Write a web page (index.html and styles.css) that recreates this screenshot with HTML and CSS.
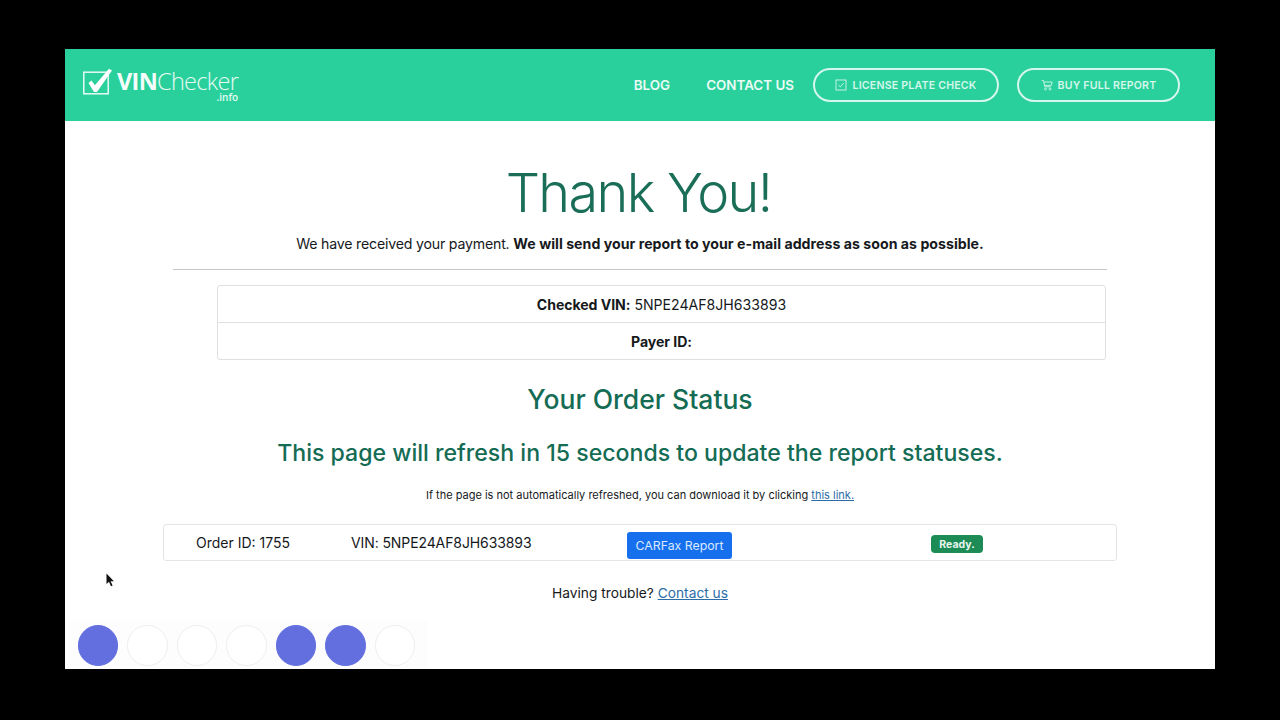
FILE: index.html
```html
<!DOCTYPE html>
<html lang="en">
<head>
<meta charset="utf-8">
<title>Thank You - VINChecker</title>
<link rel="stylesheet" href="styles.css">
</head>
<body>
<div class="window">
  <header class="topbar">
    <a class="logo">
      <svg class="logo-mark" width="30" height="30" viewBox="0 0 30 30" aria-hidden="true">
        <rect x=".8" y="4.2" width="24.4" height="21.6" fill="none" stroke="#e6faf3" stroke-width="1.5"/>
        <path d="M5.5 15l3-2.6 3.4 4.8L26 .8l3 1.8-15 21.4h-3z" fill="#fff"/>
      </svg>
      <span class="logo-text"><span class="logo-name"><b>VIN</b>Checker</span><span class="logo-tld">.info</span></span>
    </a>
    <nav class="nav">
      <a class="nav-link link-blog">BLOG</a>
      <a class="nav-link link-contact">CONTACT US</a>
      <a class="pill pill-plate">
        <svg width="12" height="12" viewBox="0 0 12 12" aria-hidden="true"><rect x="1" y="1" width="10" height="10" fill="none" stroke="#d5f6ea" stroke-width="0.9"/><path d="M3.4 6l1.9 1.9 3.3-3.9" fill="none" stroke="#d5f6ea" stroke-width="0.9"/></svg>
        LICENSE PLATE CHECK
      </a>
      <a class="pill pill-buy">
        <svg width="12" height="12" viewBox="0 0 12 12" aria-hidden="true"><path d="M.6 1.4h1.8l1.4 6.4h6M2.8 3h8.4l-1 3.4H3.5" fill="none" stroke="#d5f6ea" stroke-width="0.9"/><circle cx="4.5" cy="10" r="1" fill="none" stroke="#d5f6ea" stroke-width="0.8"/><circle cx="9" cy="10" r="1" fill="none" stroke="#d5f6ea" stroke-width="0.8"/></svg>
        BUY FULL REPORT
      </a>
    </nav>
  </header>
  <main class="content">
    <h1 class="title">Thank You!</h1>
    <p class="lead">We have received your payment. <strong>We will send your report to your e-mail address as soon as possible.</strong></p>
    <hr class="rule">
    <ul class="facts">
      <li class="fact"><strong>Checked VIN:</strong> 5NPE24AF8JH633893</li>
      <li class="fact"><strong>Payer ID:</strong></li>
    </ul>
    <h2 class="status-title">Your Order Status</h2>
    <h3 class="refresh">This page will refresh in 15 seconds to update the report statuses.</h3>
    <p class="note">If the page is not automatically refreshed, you can download it by clicking <a class="link">this link.</a></p>
    <div class="order">
      <span class="order-id">Order ID: 1755</span>
      <span class="order-vin">VIN: 5NPE24AF8JH633893</span>
      <a class="btn">CARFax Report</a>
      <span class="badge">Ready.</span>
    </div>
    <p class="help">Having trouble? <a class="link">Contact us</a></p>
    <div class="dots">
      <span class="dot on"></span>
      <span class="dot"></span>
      <span class="dot"></span>
      <span class="dot"></span>
      <span class="dot on"></span>
      <span class="dot on"></span>
      <span class="dot"></span>
    </div>
  </main>
  <svg class="cursor" width="9" height="15" viewBox="0 0 9 15" aria-hidden="true"><path d="M.5.5v10.5l2.5-2.2 2 4.4 1.6-.7-2-4.3h3.3z" fill="#111"/></svg>
</div>
</body>
</html>
```

FILE: styles.css
```css
* { box-sizing: border-box; }
html, body { margin: 0; height: 100%; }
body {
  background: #000;
  padding: 49px 65px 51px;
  font-family: Inter, "Liberation Sans", sans-serif;
  color: #16191c;
  overflow: hidden;
}
.window {
  position: relative;
  width: 1150px;
  height: 620px;
  background: #fff;
  overflow: hidden;
}
.topbar {
  height: 72px;
  background: #2ad09b;
  display: flex;
  align-items: flex-start;
  justify-content: space-between;
  padding: 0 35px 0 18px;
}
.logo { display: flex; align-items: flex-start; color: #fff; margin-top: 19px; }
.logo-mark { display: block; margin-right: 4px; }
.logo-text { display: flex; flex-direction: column; align-items: flex-end; font-family: "Open Sans", sans-serif; margin-top: 2px; }
.logo-name { font-size: 23.5px; line-height: 22px; letter-spacing: -0.7px; color: #e6faf3; font-weight: 300; }
.logo-name b { font-weight: 700; color: #f4fdfa; }
.logo-tld { font-size: 10px; line-height: 10px; font-weight: 600; margin-right: 0; color: #e6faf3; }
.nav { display: flex; align-items: center; height: 72px; }
.nav-link { font-size: 13.4px; font-weight: 600; color: #e9fbf5; }
.link-blog { margin-right: 36px; }
.link-contact { margin-right: 19px; }
.pill {
  height: 34px;
  border: 2px solid #d5f6ea;
  border-radius: 17px;
  display: flex;
  align-items: center;
  justify-content: center;
  gap: 5px;
  font-size: 10.6px;
  font-weight: 600;
  letter-spacing: .2px;
  color: #d5f6ea;
}
.pill-plate { width: 186px; margin-right: 18px; }
.pill-buy { width: 163px; }
.content { display: flex; flex-direction: column; align-items: center; position: relative; height: 548px; }
.title { margin: 40px 0 0; padding-right: 3px; font-size: 54px; line-height: 64px; font-weight: 300; letter-spacing: -1.65px; color: #1a6e58; }
.lead { margin: 8px 0 0; font-size: 14.15px; line-height: 22px; letter-spacing: -.19px; }
.lead strong { font-weight: 700; letter-spacing: .03px; }
.rule { width: 934px; margin: 14px 0 0; border: 0; border-top: 1px solid #c4c6c8; }
.facts { list-style: none; width: 889px; margin: 15px 0 0 43px; padding: 0; border: 1px solid #dfe0e1; border-radius: 3px; }
.fact { height: 36px; display: flex; align-items: center; justify-content: center; gap: 4px; font-size: 14.1px; }
.fact + .fact { height: 37px; border-top: 1px solid #dfe0e1; }
.fact strong { font-weight: 700; letter-spacing: -.06px; }
.status-title { margin: 22px 0 0; font-size: 26.5px; line-height: 34px; font-weight: 500; color: #146c54; }
.refresh { margin: 20px 0 0; font-size: 23.1px; line-height: 34px; font-weight: 500; color: #146c54; }
.note { margin: 17px 0 0; font-size: 11px; line-height: 16px; }
.link { color: #2c6da8; text-decoration: underline; }
.order {
  position: relative;
  width: 954px;
  height: 37px;
  margin: 21px 0 0;
  border: 1px solid #e4e5e6;
  border-radius: 3px;
  display: flex;
  align-items: center;
  font-size: 14px;
}
.order-id { margin-left: 32px; width: 155px; }
.order-vin { width: 276px; letter-spacing: -.1px; }
.btn {
  width: 105px;
  height: 27px;
  margin-top: 6px;
  background: #1670ee;
  border-radius: 3px;
  color: #dbe9ff;
  font-size: 12.3px;
  display: flex;
  align-items: center;
  justify-content: center;
}
.badge {
  margin-left: 199px;
  margin-top: 3px;
  width: 52px;
  height: 18px;
  background: #1c8b56;
  border-radius: 4px;
  color: #e8f5ee;
  font-size: 10.5px;
  font-weight: 700;
  display: flex;
  align-items: center;
  justify-content: center;
}
.help { margin: 22px 0 0; font-size: 13.75px; line-height: 20px; }
.dots {
  position: absolute;
  left: 0;
  bottom: 0;
  width: 362px;
  padding: 4px 0 3.5px 12.5px;
  background: #fdfdfe;
  display: flex;
  gap: 9px;
}
.dot { width: 40.5px; height: 40.5px; border-radius: 50%; background: #fff; border: 1px solid #eeeeef; }
.dot.on { background: #636fdf; border-color: #636fdf; }
.cursor { position: absolute; left: 41px; top: 524px; }
```
